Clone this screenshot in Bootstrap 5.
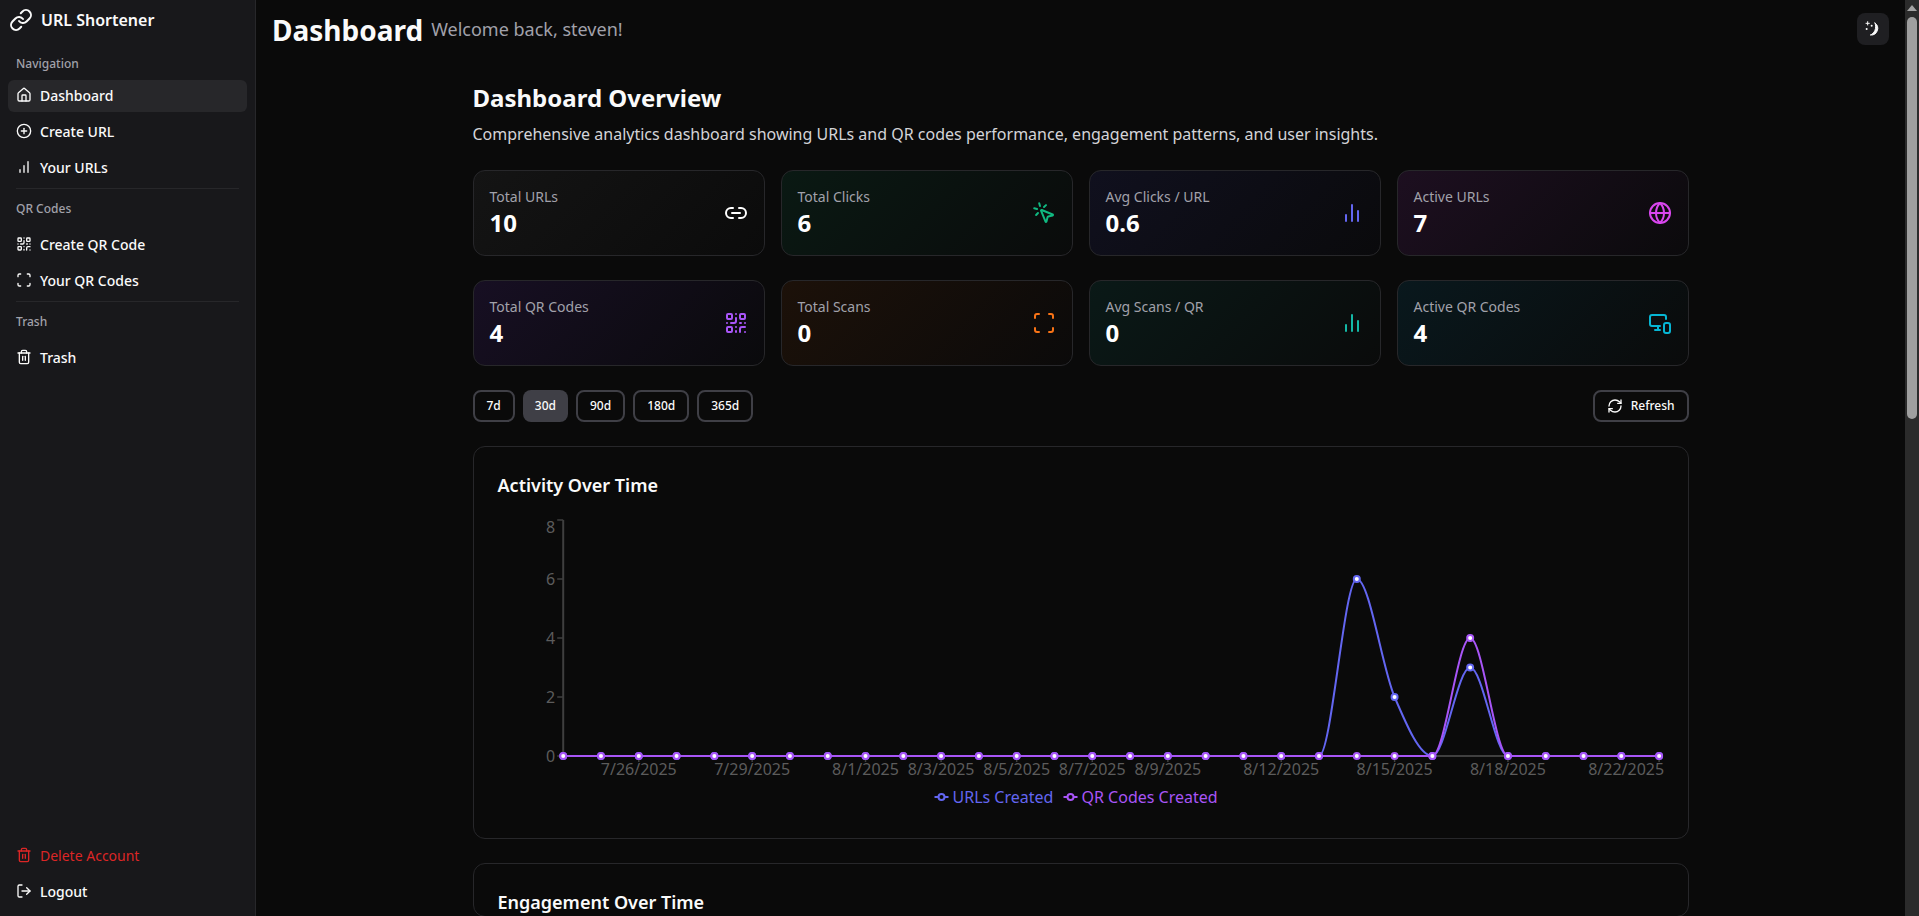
<!DOCTYPE html>
<html lang="en">
<head>
<meta charset="UTF-8">
<title>URL Shortener - Dashboard</title>
<link href="https://cdn.jsdelivr.net/npm/bootstrap@5.3.3/dist/css/bootstrap.min.css" rel="stylesheet">
<style>
    html, body { height: 100%; }
    body {
        background: #0a0a0a;
        color: #fafafa;
        font-family: "Noto Sans", "Liberation Sans", sans-serif;
        overflow: hidden;
    }
    .ico {
        width: 16px; height: 16px;
        fill: none; stroke: currentColor; stroke-width: 2;
        stroke-linecap: round; stroke-linejoin: round;
        flex: none;
    }
    .ico-lg { width: 24px; height: 24px; }

    .side {
        width: 256px; flex: none;
        background: #18181b;
        border-right: 1px solid #27272a;
        padding: 8px 8px 4px;
    }
    .side-brand { height: 24px; margin: 0 0 17px 1px; gap: 8px; font-size: 16px; font-weight: 600; line-height: 24px; }
    .side-label { font-size: 12px; font-weight: 500; color: #a1a1aa; height: 28px; line-height: 28px; padding-left: 8px; margin-bottom: 6px; }
    .side-label.first { margin-bottom: 3px; line-height: 30px; }
    .side-link {
        height: 32px; padding: 0 8px 2px; gap: 8px;
        font-size: 14px; font-weight: 500; color: #fafafa;
        border-radius: 6px; text-decoration: none;
        margin-bottom: 4px;
    }
    .side-link.current { background: #27272a; }
    .side-link.danger { color: #dc2626; font-weight: 400; }
    .side-sep { height: 1px; background: #27272a; margin: 0 8px 6px; }

    .main-area { min-width: 0; overflow: hidden; }
    .top-bar { height: 58px; padding: 0 16px; }
    .top-title { font-size: 28px; font-weight: 700; line-height: 38px; margin: 2px 0 0; }
    .top-sub { font-size: 18px; color: #a1a1aa; margin-left: 8px; }
    .theme-btn {
        width: 32px; height: 32px; padding: 0;
        background: #1f1f22; border: 0; border-radius: 8px; color: #fafafa;
    }
    .theme-btn .ico { stroke-width: 1.5; }
    .wrap-7xl { width: 1216px; margin: 0 auto; }
    .over-title { font-size: 24px; font-weight: 700; line-height: 32px; margin: 24px 0 8px; }
    .over-text { font-size: 16px; color: #d4d4d8; line-height: 24px; margin-bottom: 24px; }

    .stat-box {
        height: 86px; padding: 0 16px;
        border: 1px solid #27272a; border-radius: 12px;
    }
    .stat-label { font-size: 14px; color: #a1a1aa; line-height: 20px; }
    .stat-num { font-size: 24px; font-weight: 700; line-height: 32px; color: #fff; }
    .tint-gray { background: linear-gradient(135deg, #141414, #0b0b0b); }
    .tint-green { background: linear-gradient(135deg, #0a1913, #0a0b0b); }
    .tint-indigo { background: linear-gradient(135deg, #10101e, #0a0a0c); }
    .tint-fuchsia { background: linear-gradient(135deg, #1d0f20, #0b0a0c); }
    .tint-purple { background: linear-gradient(135deg, #170f23, #0a0a0c); }
    .tint-orange { background: linear-gradient(135deg, #1c1109, #0b0a0a); }
    .tint-teal { background: linear-gradient(135deg, #0a1917, #0a0b0b); }
    .tint-cyan { background: linear-gradient(135deg, #09181d, #0a0b0b); }

    .range-btn {
        height: 32px; padding: 0 12px;
        font-size: 12px; font-weight: 500; line-height: 1;
        color: #fafafa; background: transparent;
        border: 2px solid #3f3f46; border-radius: 8px;
    }
    .range-btn.on { background: #3f3f46; border: 0; }
    .range-btn:hover { color: #fafafa; background: #27272a; }

    .chart-box {
        background: #0a0a0a;
        border: 1px solid #27272a; border-radius: 12px;
        padding: 0 24px; margin-top: 24px;
        color: #fafafa;
    }
    .chart-box h5 { font-size: 18px; font-weight: 600; line-height: 28px; margin: 24px 0 0; }
    .act-box { height: 393px; }
    .act-svg { display: block; margin: 0 0 0 -24px; }
    .act-svg text { font-family: "Noto Sans", "Liberation Sans", sans-serif; font-size: 16px; }

    .fake-scroll { width: 14px; flex: none; background: #2b2b2b; padding: 0 2px; }
    .fake-arrow { width: 0; height: 0; margin: 5px auto 0; border: 5px solid transparent; border-top: 0; border-bottom: 6px solid #a3a3a3; }
    .fake-thumb { height: 402px; margin-top: 6px; background: #9f9f9f; border-radius: 5px; }
</style>
</head>
<body class="d-flex">

<svg width="0" height="0" class="position-absolute">
    <symbol id="i-link" viewBox="0 0 24 24"><path d="M10 13a5 5 0 0 0 7.54.54l3-3a5 5 0 0 0-7.07-7.07l-1.72 1.71"/><path d="M14 11a5 5 0 0 0-7.54-.54l-3 3a5 5 0 0 0 7.07 7.07l1.71-1.71"/></symbol>
    <symbol id="i-link2" viewBox="0 0 24 24"><path d="M9 17H7A5 5 0 0 1 7 7h2"/><path d="M15 7h2a5 5 0 1 1 0 10h-2"/><path d="M8 12h8"/></symbol>
    <symbol id="i-home" viewBox="0 0 24 24"><path d="M15 21v-8a1 1 0 0 0-1-1h-4a1 1 0 0 0-1 1v8"/><path d="M3 10a2 2 0 0 1 .709-1.528l7-5.999a2 2 0 0 1 2.582 0l7 5.999A2 2 0 0 1 21 10v9a2 2 0 0 1-2 2H5a2 2 0 0 1-2-2z"/></symbol>
    <symbol id="i-plus" viewBox="0 0 24 24"><circle cx="12" cy="12" r="10"/><path d="M8 12h8"/><path d="M12 8v8"/></symbol>
    <symbol id="i-bars-up" viewBox="0 0 24 24"><path d="M12 20V10"/><path d="M18 20V4"/><path d="M6 20v-4"/></symbol>
    <symbol id="i-bars" viewBox="0 0 24 24"><path d="M18 20V10"/><path d="M12 20V4"/><path d="M6 20v-6"/></symbol>
    <symbol id="i-qr" viewBox="0 0 24 24"><rect x="3" y="3" width="5" height="5" rx="1"/><rect x="16" y="3" width="5" height="5" rx="1"/><rect x="3" y="16" width="5" height="5" rx="1"/><path d="M21 16h-3a2 2 0 0 0-2 2v3"/><path d="M21 21v.01"/><path d="M12 7v3a2 2 0 0 1-2 2H7"/><path d="M3 12h.01"/><path d="M12 3h.01"/><path d="M12 16v.01"/><path d="M16 12h1"/><path d="M21 12v.01"/><path d="M12 21v-1"/></symbol>
    <symbol id="i-scan" viewBox="0 0 24 24"><path d="M3 7V5a2 2 0 0 1 2-2h2"/><path d="M17 3h2a2 2 0 0 1 2 2v2"/><path d="M21 17v2a2 2 0 0 1-2 2h-2"/><path d="M7 21H5a2 2 0 0 1-2-2v-2"/></symbol>
    <symbol id="i-trash" viewBox="0 0 24 24"><path d="M3 6h18"/><path d="M19 6v14c0 1-1 2-2 2H7c-1 0-2-1-2-2V6"/><path d="M8 6V4c0-1 1-2 2-2h4c1 0 2 1 2 2v2"/><path d="M10 11v6"/><path d="M14 11v6"/></symbol>
    <symbol id="i-logout" viewBox="0 0 24 24"><path d="M9 21H5a2 2 0 0 1-2-2V5a2 2 0 0 1 2-2h4"/><path d="m16 17 5-5-5-5"/><path d="M21 12H9"/></symbol>
    <symbol id="i-click" viewBox="0 0 24 24"><path d="M14 4.1 12 6"/><path d="m5.1 8-2.9-.8"/><path d="m6 12-1.9 2"/><path d="M7.2 2.2 8 5.1"/><path d="M9.037 9.69a.498.498 0 0 1 .653-.653l11 4.5a.5.5 0 0 1-.074.949l-4.349 1.041a1 1 0 0 0-.74.739l-1.04 4.35a.5.5 0 0 1-.95.074z"/></symbol>
    <symbol id="i-globe" viewBox="0 0 24 24"><circle cx="12" cy="12" r="10"/><path d="M12 2a14.5 14.5 0 0 0 0 20 14.5 14.5 0 0 0 0-20"/><path d="M2 12h20"/></symbol>
    <symbol id="i-devices" viewBox="0 0 24 24"><path d="M18 8V6a2 2 0 0 0-2-2H4a2 2 0 0 0-2 2v7a2 2 0 0 0 2 2h8"/><path d="M10 19v-3.96 3.15"/><path d="M7 19h5"/><rect x="16" y="12" width="6" height="10" rx="2"/></symbol>
    <symbol id="i-refresh" viewBox="0 0 24 24"><path d="M3 12a9 9 0 0 1 9-9 9.75 9.75 0 0 1 6.74 2.74L21 8"/><path d="M21 3v5h-5"/><path d="M21 12a9 9 0 0 1-9 9 9.75 9.75 0 0 1-6.74-2.74L3 16"/><path d="M8 16H3v5"/></symbol>
    <symbol id="i-moon" viewBox="0 0 24 24"><path d="M15 3a10 10 0 0 1-7 18c6-2 10-10 7-18Z" fill="currentColor"/><path d="M4 1v5M1.500 3.500h5" stroke-width="1.500"/><path d="M10 7v.01M2.500 12v.01" stroke-width="3"/></symbol>
</svg>

<aside class="side d-flex flex-column">
    <div class="side-brand d-flex align-items-center"><svg class="ico ico-lg"><use href="#i-link"/></svg>URL Shortener</div>

    <div class="side-label first">Navigation</div>
    <a href="#" class="side-link current d-flex align-items-center"><svg class="ico"><use href="#i-home"/></svg>Dashboard</a>
    <a href="#" class="side-link d-flex align-items-center"><svg class="ico"><use href="#i-plus"/></svg>Create URL</a>
    <a href="#" class="side-link d-flex align-items-center"><svg class="ico"><use href="#i-bars-up"/></svg>Your URLs</a>
    <div class="side-sep"></div>

    <div class="side-label">QR Codes</div>
    <a href="#" class="side-link d-flex align-items-center"><svg class="ico"><use href="#i-qr"/></svg>Create QR Code</a>
    <a href="#" class="side-link d-flex align-items-center"><svg class="ico"><use href="#i-scan"/></svg>Your QR Codes</a>
    <div class="side-sep"></div>

    <div class="side-label">Trash</div>
    <a href="#" class="side-link d-flex align-items-center"><svg class="ico"><use href="#i-trash"/></svg>Trash</a>

    <div class="mt-auto">
        <a href="#" class="side-link danger d-flex align-items-center"><svg class="ico"><use href="#i-trash"/></svg>Delete Account</a>
        <a href="#" class="side-link d-flex align-items-center"><svg class="ico"><use href="#i-logout"/></svg>Logout</a>
    </div>
</aside>

<div class="main-area flex-grow-1">
    <header class="top-bar d-flex align-items-center justify-content-between">
        <div class="d-flex align-items-center">
            <h1 class="top-title">Dashboard</h1>
            <span class="top-sub">Welcome back, steven!</span>
        </div>
        <button class="theme-btn d-flex align-items-center justify-content-center"><svg class="ico"><use href="#i-moon"/></svg></button>
    </header>

    <main class="wrap-7xl">
        <h2 class="over-title">Dashboard Overview</h2>
        <p class="over-text">Comprehensive analytics dashboard showing URLs and QR codes performance, engagement patterns, and user insights.</p>

        <div class="row row-cols-4 gx-3 gy-4" id="stats"></div>

        <div class="d-flex justify-content-between mt-4">
            <div class="d-flex gap-2">
                <button class="btn range-btn">7d</button>
                <button class="btn range-btn on">30d</button>
                <button class="btn range-btn">90d</button>
                <button class="btn range-btn">180d</button>
                <button class="btn range-btn">365d</button>
            </div>
            <button class="btn range-btn d-flex align-items-center gap-2"><svg class="ico"><use href="#i-refresh"/></svg>Refresh</button>
        </div>

        <section class="chart-box act-box">
            <h5>Activity Over Time</h5>
            <svg class="act-svg" id="activity" width="1214" height="340"></svg>
        </section>

        <section class="chart-box">
            <h5>Engagement Over Time</h5>
        </section>
    </main>
</div>

<div class="fake-scroll">
    <div class="fake-arrow"></div>
    <div class="fake-thumb"></div>
</div>

<script>
    const stats = [
        ["Total URLs", "10", "i-link2", "tint-gray", "#ffffff"],
        ["Total Clicks", "6", "i-click", "tint-green", "#10b981"],
        ["Avg Clicks / URL", "0.6", "i-bars", "tint-indigo", "#6366f1"],
        ["Active URLs", "7", "i-globe", "tint-fuchsia", "#d946ef"],
        ["Total QR Codes", "4", "i-qr", "tint-purple", "#a855f7"],
        ["Total Scans", "0", "i-scan", "tint-orange", "#f97316"],
        ["Avg Scans / QR", "0", "i-bars", "tint-teal", "#14b8a6"],
        ["Active QR Codes", "4", "i-devices", "tint-cyan", "#06b6d4"]
    ];
    document.getElementById("stats").innerHTML = stats.map(s => `
        <div class="col">
            <div class="stat-box ${s[3]} d-flex align-items-center justify-content-between">
                <div>
                    <div class="stat-label">${s[0]}</div>
                    <div class="stat-num">${s[1]}</div>
                </div>
                <svg class="ico ico-lg" style="color:${s[4]}"><use href="#${s[2]}"/></svg>
            </div>
        </div>`).join("");

    // chart, origin of the svg is the inner left edge of the card
    const left = 89.2, step = 37.79, base = 756 - 447 - 52, unit = 29.5;
    const urls = new Array(30).fill(0);
    const qrs = new Array(30).fill(0);
    urls[21] = 6; urls[22] = 2; urls[24] = 3;
    qrs[24] = 4;
    const ticks = {2: "7/26/2025", 5: "7/29/2025", 8: "8/1/2025", 10: "8/3/2025", 12: "8/5/2025", 14: "8/7/2025",
        16: "8/9/2025", 19: "8/12/2025", 22: "8/15/2025", 25: "8/18/2025", 29: "8/22/2025"};
    const X = i => left + i * step;
    const Y = v => base - v * unit;

    // same curve as d3 curveMonotoneX
    function monotone(vals) {
        const pts = vals.map((v, i) => [X(i), Y(v)]);
        const n = pts.length;
        const sl = [];
        for (let i = 0; i < n - 1; i++) sl.push((pts[i + 1][1] - pts[i][1]) / step);
        const t = [];
        for (let i = 0; i < n; i++) {
            if (i === 0) t.push(sl[0]);
            else if (i === n - 1) t.push(sl[n - 2]);
            else if (sl[i - 1] * sl[i] <= 0) t.push(0);
            else {
                const s = sl[i - 1], e = sl[i];
                const p = (s + e) / 2;
                t.push((Math.sign(s) + Math.sign(e)) * Math.min(Math.abs(s), Math.abs(e), 0.5 * Math.abs(p)));
            }
        }
        let d = "M" + pts[0][0] + "," + pts[0][1];
        for (let i = 0; i < n - 1; i++) {
            const h = step / 3;
            d += "C" + (pts[i][0] + h) + "," + (pts[i][1] + h * t[i]) + " " + (pts[i + 1][0] - h) + "," + (pts[i + 1][1] - h * t[i + 1]) + " " + pts[i + 1][0] + "," + pts[i + 1][1];
        }
        return d;
    }

    let svg = "";
    svg += `<path d="M${left} ${Y(8)}V${base}H${X(29)}" fill="none" stroke="#3f3f3f" stroke-width="2"/>`;
    [0, 2, 4, 6, 8].forEach(v => {
        svg += `<path d="M${left - 6} ${Y(v)}H${left}" stroke="#3f3f3f" stroke-width="1.5"/>`;
        svg += `<text x="${left - 8}" y="${Y(v) + (v === 8 ? 13 : 6)}" text-anchor="end" fill="#5c5c5c">${v}</text>`;
    });
    Object.keys(ticks).forEach(i => {
        // last label is pulled back so it stays inside the plot
        const lx = i == 29 ? X(i) - 33 : X(i);
        svg += `<path d="M${X(i)} ${base}v6" stroke="#3f3f3f" stroke-width="1.5"/>`;
        svg += `<text x="${lx}" y="${base + 19}" text-anchor="middle" fill="#5c5c5c">${ticks[i]}</text>`;
    });
    [[urls, "#6366f1"], [qrs, "#a855f7"]].forEach(([vals, col]) => {
        svg += `<path d="${monotone(vals)}" fill="none" stroke="${col}" stroke-width="2"/>`;
        vals.forEach((v, i) => {
            svg += `<circle cx="${X(i)}" cy="${Y(v)}" r="3" fill="#fff" stroke="${col}" stroke-width="2"/>`;
        });
    });
    // legend
    const ly = base + 41;
    const legend = (x, col, label) => `<path d="M${x} ${ly}h14" stroke="${col}" stroke-width="2"/><circle cx="${x + 7}" cy="${ly}" r="3" fill="#0a0a0a" stroke="${col}" stroke-width="2"/><text x="${x + 18}" y="${ly + 6}" fill="${col}">${label}</text>`;
    svg += legend(460.500, "#6366f1", "URLs Created");
    svg += legend(589.500, "#a855f7", "QR Codes Created");
    document.getElementById("activity").innerHTML = svg;
</script>
<script src="https://cdn.jsdelivr.net/npm/bootstrap@5.3.3/dist/js/bootstrap.bundle.min.js"></script>
</body>
</html>
